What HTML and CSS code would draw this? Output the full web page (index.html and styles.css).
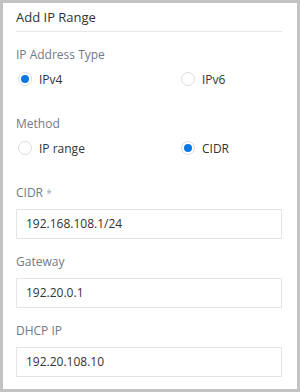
FILE: index.html
```html
<!DOCTYPE html>
<html>
<head>
<meta charset="utf-8">
<link rel="stylesheet" href="styles.css">
</head>
<body>
<div class="frame">
  <div class="header">Add IP Range</div>
  <div class="group">
    <div class="label">IP Address Type</div>
    <div class="radios">
      <label class="radio checked"><span class="circle"></span><span>IPv4</span></label>
      <label class="radio"><span class="circle"></span><span>IPv6</span></label>
    </div>
  </div>
  <div class="group">
    <div class="label">Method</div>
    <div class="radios">
      <label class="radio"><span class="circle"></span><span>IP range</span></label>
      <label class="radio checked"><span class="circle"></span><span>CIDR</span></label>
    </div>
  </div>
  <div class="field first">
    <div class="label">CIDR <span class="req">*</span></div>
    <div class="input">192.168.108.1/24</div>
  </div>
  <div class="field">
    <div class="label">Gateway</div>
    <div class="input">192.20.0.1</div>
  </div>
  <div class="field">
    <div class="label">DHCP IP</div>
    <div class="input">192.20.108.10</div>
  </div>
</div>
</body>
</html>
```

FILE: styles.css
```css
* { box-sizing: border-box; }
html, body { margin: 0; padding: 0; background: #fff; }
body {
  font-family: "Open Sans", "Noto Sans", sans-serif;
  color: #333;
}
.frame {
  width: 300px;
  height: 392px;
  border: 3px solid #c3c3c3;
  padding: 0 15px 0 13px;
  background: #fff;
}
.header {
  height: 29px;
  line-height: 28px;
  font-size: 13px;
  color: #333;
  border-bottom: 1px solid #e4e7eb;
}
.group { margin-top: 15px; }
.group + .group { margin-top: 27px; }
.label {
  font-size: 12px;
  line-height: 16px;
  color: #6f7a86;
}
.req { color: #a0a8b2; font-size: 10px; }
.radios {
  display: grid;
  grid-template-columns: 163px auto;
  margin-top: 6px;
}
.radio {
  display: flex;
  align-items: center;
  height: 20px;
  padding-left: 2px;
  font-size: 12px;
  color: #333;
  gap: 7px;
}
.circle {
  width: 14px;
  height: 14px;
  border: 1px solid #d9dde3;
  border-radius: 50%;
  display: flex;
  align-items: center;
  justify-content: center;
}
.checked .circle::after {
  content: "";
  width: 8px;
  height: 8px;
  border-radius: 50%;
  background: #0b78e3;
}
.field { margin-top: 15px; }
.field.first { margin-top: 27px; }
.input {
  margin-top: 8px;
  height: 30px;
  border: 1px solid #e1e4e8;
  padding-left: 9px;
  font-size: 12px;
  line-height: 28px;
  color: #333;
}
```
